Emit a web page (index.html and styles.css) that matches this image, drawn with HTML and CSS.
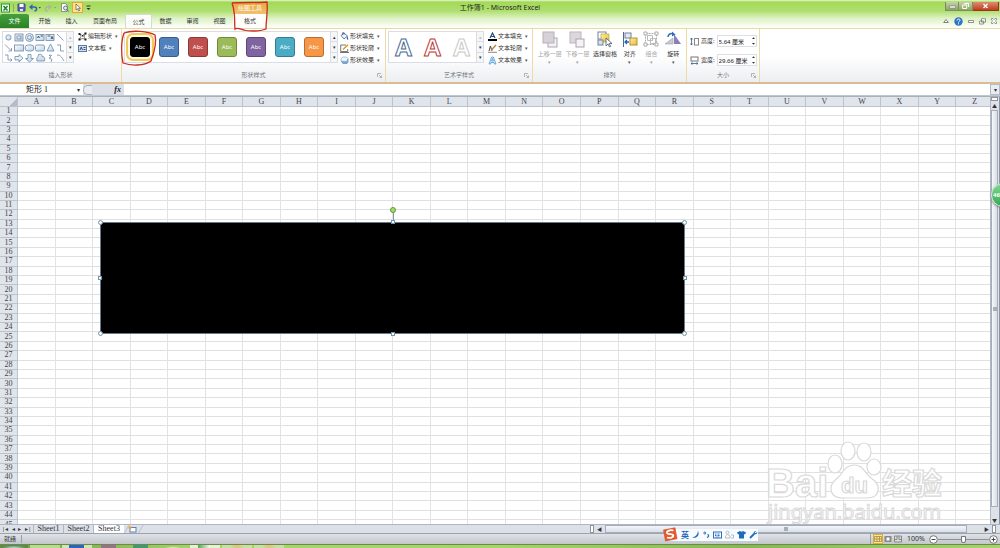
FILE: index.html
```
<!DOCTYPE html>
<html lang="zh-CN">
<head>
<meta charset="utf-8">
<title>工作簿1 - Microsoft Excel</title>
<link rel="stylesheet" href="styles.css">
</head>
<body>
<svg width="0" height="0" class="defs" aria-hidden="true">
  <defs>
    <linearGradient id="fillBlue" x1="0" y1="0" x2="1" y2="1"><stop offset="0" stop-color="#fff"/><stop offset="1" stop-color="#b9d3ea"/></linearGradient>
    <linearGradient id="gold" x1="0" y1="0" x2="1" y2="1"><stop offset="0" stop-color="#fdf0a0"/><stop offset="1" stop-color="#e6b93a"/></linearGradient>
    <symbol id="launcher" viewBox="0 0 5 5"><path d="M.5 4V.5H4M2 2l2.5 2.5M4.5 2.5v2h-2" fill="none" stroke="#999" stroke-width=".7"/></symbol>
    <symbol id="spinner" viewBox="0 0 5 10"><path d="M1 3h3L2.500 1.200zM1 7h3L2.500 8.800z" fill="#333"/></symbol>
  </defs>
</svg>

<header class="top">
  <div class="titlebar">
    <div class="quick">
      <svg width="9" height="10" viewBox="0 0 9 10"><rect x=".5" y="1" width="8" height="8" fill="#f2fbf0" stroke="#2f8f3a"/><path d="M2.500 3l4 4.500M6.500 3l-4 4.500" stroke="#16802a" stroke-width="1.400"/></svg>
      <i class="sep"></i>
      <button aria-label="保存"><svg width="9" height="9" viewBox="0 0 9 9"><path d="M1 1h7v7H1z" fill="#5a62b8" stroke="#3b4491"/><path d="M2.500 1h4v3h-4z" fill="#fff"/><path d="M3 6h3v2H3z" fill="#dfe3f5"/></svg></button>
      <button aria-label="撤消"><svg width="12" height="9" viewBox="0 0 12 9"><path d="M2 4h3.500c3 0 2.500 4 0 4" fill="none" stroke="#2f62b5" stroke-width="1.500"/><path d="M0 4l3.500-3v6z" fill="#2f62b5"/><path d="M9.500 4h2.500l-1.200 1.600z" fill="#444"/></svg></button>
      <button aria-label="恢复"><svg width="13" height="9" viewBox="0 0 13 9"><path d="M6 4H3.500C.5 4 1 8 3.500 8" fill="none" stroke="#a9b5a0" stroke-width="1.300"/><path d="M8 4L4.500 1v6z" fill="#a9b5a0"/><path d="M10 4h2.500l-1.200 1.600z" fill="#8c9c7c"/></svg></button>
      <button aria-label="打印预览"><svg width="9" height="9" viewBox="0 0 9 9"><path d="M1.500.5h4l1.500 2V8.500H1.500z" fill="#fff" stroke="#777" stroke-width=".8"/><circle cx="5.500" cy="5" r="2" fill="#d9ecfa" stroke="#4d5f78" stroke-width=".8"/><path d="M7 6.500l1.500 2" stroke="#4d5f78"/></svg></button>
      <button class="picked" aria-label="选择对象"><svg width="9" height="9" viewBox="0 0 9 9"><path d="M3 1v6l1.500-1.300L5.700 8l.9-.5-1.100-2.200h2z" fill="#fff" stroke="#555" stroke-width=".7"/></svg></button>
      <button aria-label="自定义"><svg width="5" height="6" viewBox="0 0 5 6"><path d="M.5 1h4" stroke="#333"/><path d="M.5 3h4L2.500 5z" fill="#333"/></svg></button>
    </div>
    <div class="context-title">绘图工具</div>
    <h1 class="title">工作簿1 - Microsoft Excel</h1>
    <div class="window-buttons">
      <button aria-label="最小化"><svg width="7" height="6" viewBox="0 0 7 6"><path d="M.5 3h6v2h-6z" fill="#fff" stroke="#667" stroke-width=".5"/></svg></button>
      <button aria-label="还原"><svg width="7" height="6" viewBox="0 0 7 6"><path d="M2.500.5h4v3.500M.7 2h4v3.500h-4z" fill="none" stroke="#fff"/></svg></button>
      <button class="close" aria-label="关闭"><svg width="7" height="6" viewBox="0 0 7 6"><path d="M1.500 1l4 4M5.500 1l-4 4" stroke="#fff" stroke-width="1.400"/></svg></button>
    </div>
  </div>
  <nav class="tabs">
    <button class="file">文件</button>
    <button>开始</button>
    <button>插入</button>
    <button class="wide">页面布局</button>
    <button class="hovered">公式</button>
    <button>数据</button>
    <button>审阅</button>
    <button>视图</button>
    <button class="active">格式</button>
    <div class="doc-buttons">
      <button aria-label="折叠功能区"><svg width="6" height="6" viewBox="0 0 6 6"><path d="M.7 4.500L3 1.500l2.300 3z" fill="#fff" stroke="#666" stroke-width=".8"/></svg></button>
      <button aria-label="帮助"><svg width="9" height="9" viewBox="0 0 9 9"><circle cx="4.500" cy="4.500" r="4.200" fill="#2f74c4"/><path d="M3 3.500c0-2 3-2 3-.2 0 1-1.500 1-1.500 2.200M4.500 6.300v1" fill="none" stroke="#fff"/></svg></button>
      <button aria-label="最小化窗口"><svg width="6" height="6" viewBox="0 0 6 6"><path d="M.5 2.500h5v2h-5z" fill="#fff" stroke="#777" stroke-width=".8"/></svg></button>
      <button aria-label="还原窗口"><svg width="7" height="7" viewBox="0 0 7 7"><path d="M2.500.7h4v3.500h-4zM.6 3h4v3h-4z" fill="#fff" stroke="#777" stroke-width=".8"/></svg></button>
      <button aria-label="关闭窗口"><svg width="6" height="6" viewBox="0 0 6 6"><path d="M.5.5h1.500l1 1.200 1-1.200h1.500v1.500L4.300 3l1.200 1v1.500H4L3 4.300 2 5.500H.5V4l1.200-1L.5 2z" fill="#fff" stroke="#777" stroke-width=".7"/></svg></button>
    </div>
  </nav>
</header>

<main class="ribbon">
  <section class="group shapes">
    <div class="body">
      <div class="gallery">
        <svg class="shape-grid" width="62" height="31" viewBox="0 0 62 31" fill="url(#fillBlue)" stroke="#6f88a8" stroke-width=".8">
          <circle cx="5.500" cy="5.500" r="2.600"/>
          <rect x="12" y="2" width="8" height="7"/><rect x="14" y="4" width="4" height="3"/>
          <circle cx="26.500" cy="5.500" r="4"/><circle cx="26.500" cy="5.500" r="2"/>
          <rect x="33" y="2.500" width="8" height="6"/><path d="M34.500 6l1-2 1 2M37.500 4h2.500" stroke="#234"/>
          <rect x="43" y="2.500" width="8" height="6"/><path d="M44.500 4h3M48 7l1-2.500 1 2.500" stroke="#234"/>
          <path d="M54 2l6.500 6.500" fill="none"/>
          <path d="M2 12.500l6 6M8.500 16v3h-3" fill="none"/>
          <rect x="11.500" y="13" width="9" height="6"/>
          <rect x="22" y="13" width="9" height="6" rx="3"/>
          <rect x="32.500" y="13" width="9" height="6" rx="1.500"/>
          <path d="M47.500 12l3.500 7h-7z"/><path d="M54 13h3.500v6H61" fill="none"/>
          <path d="M2 23h3v5h4M7.500 26.500L9 28l-1.500 1.500" fill="none"/>
          <path d="M12 24.500h4v-2l4 3.700-4 3.700v-2h-4zM25 22.500h3v4h2.500l-4 3.500-4-3.500H25zM34 29c-1-4 1-3 1.500-6.500 3-1 4 1 3.500 2 3 0 3 2 2.500 4.500z"/>
          <path d="M46 23l2 2-2 1 3 1.500-1 2.500M46 23l3 .5M54 23c4 0 5 3 7 6" fill="none"/>
        </svg>
        <div class="scroller"><button disabled aria-label="上一行">▴</button><button aria-label="下一行">▾</button><button aria-label="更多">▾</button></div>
      </div>
      <div class="commands">
        <button><svg width="9" height="9" viewBox="0 0 9 9"><path d="M1.500 2l3 1.500 3-2.500-1.500 4 2 3-3-1.500-4 1 2-3z" fill="none" stroke="#333" stroke-width=".6"/><path d="M.5 1h2v2h-2zM6.500.5h2v2h-2zM.5 6.500h2v2h-2zM6.500 6.500h2v2h-2zM4 3h1.500v1.500H4z" fill="#222"/></svg>编辑形状<b>▾</b></button>
        <button><svg width="9" height="9" viewBox="0 0 9 9"><rect x=".5" y="1.500" width="8" height="6" fill="#cfe1f3" stroke="#5b7ba4"/><path d="M2 6l1.300-3 1.200 3M5.500 3.500h2M5.500 5.500h2" fill="none" stroke="#223f6b" stroke-width=".9"/></svg>文本框<b>▾</b></button>
      </div>
    </div>
    <h2>插入形状</h2>
  </section>

  <section class="group styles">
    <div class="body">
      <div class="gallery">
        <div class="swatches">
          <button class="swatch black"><span>Abc</span></button>
          <button class="swatch blue"><span>Abc</span></button>
          <button class="swatch red"><span>Abc</span></button>
          <button class="swatch green"><span>Abc</span></button>
          <button class="swatch purple"><span>Abc</span></button>
          <button class="swatch teal"><span>Abc</span></button>
          <button class="swatch orange"><span>Abc</span></button>
        </div>
        <div class="scroller"><button aria-label="上一行">▴</button><button aria-label="下一行">▾</button><button aria-label="更多">▾</button></div>
      </div>
      <div class="commands">
        <button><svg width="9" height="9" viewBox="0 0 9 9"><path d="M1 3.500L4 1l3.500 3L4 7z" fill="#eef4fb" stroke="#46618a" stroke-width=".8"/><path d="M2.500 3V.7h1.500V3" fill="none" stroke="#46618a" stroke-width=".7"/><path d="M7 4c1 1 1.500 2.500 1 4-1.500-.5-1.500-2-1-4z" fill="#2f6fb8"/></svg>形状填充<b>▾</b></button>
        <button><svg width="9" height="9" viewBox="0 0 9 9"><path d="M6 1H.7v6.500h7V5" fill="#fff" stroke="#555" stroke-width=".8"/><path d="M3 5.500L8 .8" stroke="#d79a22" stroke-width="1.500"/><path d="M0 8.500h9" stroke="#777"/></svg>形状轮廓<b>▾</b></button>
        <button><svg width="9" height="9" viewBox="0 0 9 9"><path d="M1 5.500l2 2.500h4l1.500-2V3l-2-1.500H3L1 3.500z" fill="#7aa0cf"/><path d="M1 5V3l1.500-2h4L8 2.500 6.500 5.500z" fill="#eef5fd" stroke="#87a8cf" stroke-width=".6"/></svg>形状效果<b>▾</b></button>
      </div>
    </div>
    <h2>形状样式</h2><svg class="launch" width="5" height="5"><use href="#launcher"/></svg>
  </section>

  <section class="group wordart">
    <div class="body">
      <div class="gallery">
        <div class="letters"><button class="navy">A</button><button class="crimson">A</button><button class="pale">A</button></div>
        <div class="scroller"><button disabled aria-label="上一行">▴</button><button aria-label="下一行">▾</button><button aria-label="更多">▾</button></div>
      </div>
      <div class="commands">
        <button><svg width="9" height="9" viewBox="0 0 9 9"><path d="M2 6l2.500-5L7 6M3 4.500h3" fill="none" stroke="#254a86" stroke-width="1.200"/><path d="M0 7h9v2H0z" fill="#000"/></svg>文本填充<b>▾</b></button>
        <button><svg width="9" height="9" viewBox="0 0 9 9"><path d="M1 7l1.500-5L4 7" fill="none" stroke="#444"/><path d="M3 6.500L8 1" stroke="#b8893a" stroke-width="1.400"/><path d="M0 8.300h9" stroke="#888"/></svg>文本轮廓<b>▾</b></button>
        <button><svg width="9" height="9" viewBox="0 0 9 9"><path d="M1 8L3.700 1h1.600L8 8H6.500L6 6.500H3L2.500 8zM3.500 5h2l-1-2.500z" fill="#e6f4ff" stroke="#4e9bd8" stroke-width=".8"/></svg>文本效果<b>▾</b></button>
      </div>
    </div>
    <h2>艺术字样式</h2><svg class="launch" width="5" height="5"><use href="#launcher"/></svg>
  </section>

  <section class="group arrange">
    <div class="body">
      <button class="big long" disabled><svg width="16" height="17" viewBox="0 0 16 17"><rect x="6" y="7" width="9" height="9" fill="#f3f1f4" stroke="#aaa6ae"/><rect x="1" y="1" width="11" height="11" fill="#d6d0d8" stroke="#b6b0b8"/></svg>上移一层<b>▾</b></button>
      <button class="big long" disabled><svg width="16" height="17" viewBox="0 0 16 17"><rect x="1" y="1" width="11" height="11" fill="#ddd6de" stroke="#bbb5bd"/><rect x="7" y="8" width="8" height="8" fill="#f5f3f5" stroke="#aaa6ae"/></svg>下移一层<b>▾</b></button>
      <button class="big long"><svg width="16" height="17" viewBox="0 0 16 17"><rect x="1" y="1" width="8" height="7" fill="#fff" stroke="#70819b"/><rect x="4" y="3" width="8" height="8" fill="url(#gold)" stroke="#b2933a" stroke-width=".6"/><rect x="1" y="9" width="5" height="5" fill="#d7e1ec" stroke="#70819b"/><path d="M9 7v8l2-2 1.500 3 1.200-.6-1.500-2.900h2.800z" fill="#fff" stroke="#456" stroke-width=".8"/></svg>选择窗格</button>
      <button class="big"><svg width="16" height="17" viewBox="0 0 16 17"><path d="M1.500 1v15" stroke="#4f6992"/><rect x="3" y="2" width="6" height="5" fill="#e4eaf1" stroke="#6e829d"/><rect x="8" y="7" width="7" height="7" fill="url(#gold)" stroke="#b2933a"/><path d="M7 11H3M5 9l-2 2 2 2" fill="none" stroke="#2563ba" stroke-width="1.300"/></svg>对齐<b>▾</b></button>
      <button class="big" disabled><svg width="16" height="17" viewBox="0 0 16 17" fill="#fff" stroke="#aaa"><path d="M2.500 2.500h11v11h-11z" stroke-dasharray="2 1"/><path d="M4.500 4.500h5v5h-5zM7.500 7.500h5v5h-5z" stroke="#bbb"/><path d="M1 1h3v3H1zM12 1h3v3h-3zM1 12h3v3H1zM12 12h3v3h-3z"/></svg>组合<b>▾</b></button>
      <button class="big"><svg width="16" height="17" viewBox="0 0 16 17"><path d="M9 3v10h7z" fill="#8a7fb5"/><path d="M8 7v6H0z" fill="#c6cad2" stroke="#9ba3b1" stroke-width=".6"/><path d="M3 6c0-3 3-4 5-3" fill="none" stroke="#2e6ec0" stroke-width="1.500"/><path d="M7 .5l3.500 3L7 5.500z" fill="#2e6ec0"/></svg>旋转<b>▾</b></button>
    </div>
    <h2>排列</h2>
  </section>

  <section class="group size">
    <div class="body">
      <div class="field"><svg width="9" height="9" viewBox="0 0 9 9"><path d="M1.500 1v7M.3 2.500L1.500 1l1.200 1.500M.3 6.500L1.500 8l1.200-1.500" fill="none" stroke="#345a93" stroke-width=".8"/><rect x="4.500" y="1.500" width="4" height="6.500" fill="#fff" stroke="#888"/></svg><label for="h">高度:</label><span class="spin"><input id="h" value="5.64 厘米"><svg width="5" height="10"><use href="#spinner"/></svg></span></div>
      <div class="field"><svg width="9" height="9" viewBox="0 0 9 9"><path d="M1 7.500h7M2.500 6.300L1 7.500l1.500 1.200M6.500 6.300L8 7.500 6.500 8.700" fill="none" stroke="#345a93" stroke-width=".8"/><rect x="1" y="1" width="7" height="4" fill="#fff" stroke="#777"/></svg><label for="w">宽度:</label><span class="spin"><input id="w" value="29.66 厘米"><svg width="5" height="10"><use href="#spinner"/></svg></span></div>
    </div>
    <h2>大小</h2><svg class="launch" width="5" height="5"><use href="#launcher"/></svg>
  </section>
</main>

<div class="formula">
  <input class="name-box" aria-label="名称框" value="矩形 1">
  <button class="drop" aria-label="名称列表">▾</button>
  <div class="fx"><i></i><button>fx</button></div>
  <input class="formula-input" aria-label="编辑栏">
  <button class="expand" aria-label="展开编辑栏">▾</button>
</div>

<div class="workspace">
  <div class="sheet">
    <table id="grid"></table>
    <div class="rectangle">
      <span class="stem"></span><span class="knob rotate"></span>
      <span class="knob nw"></span><span class="knob ne"></span><span class="knob sw"></span><span class="knob se"></span>
      <span class="knob square n"></span><span class="knob square s"></span><span class="knob square w"></span><span class="knob square e"></span>
    </div>
    <svg class="watermark" width="182" height="86" viewBox="0 0 182 86">
      <g fill="#fff" stroke="#d9d9d9" stroke-width="1.200">
        <ellipse cx="88" cy="13" rx="7" ry="9"/><ellipse cx="104" cy="14" rx="7" ry="9"/>
        <ellipse cx="75" cy="26" rx="7" ry="9"/><ellipse cx="114" cy="29" rx="7" ry="8"/>
        <path d="M94 27c9 0 11 8 17 13 6 4 8 8 7 12-1 8-8 8-13 8H83c-7 0-12-2-12-10 0-7 7-9 11-15 3-5 7-8 12-8z"/>
        <text class="wm-big" x="6" y="59">Bai</text>
        <text class="wm-du" x="81" y="55">du</text>
        <text class="wm-cn" x="122" y="56">经验</text>
        <text class="wm-url" x="8" y="81">jingyan.baidu.com</text>
      </g>
    </svg>
  </div>
  <div class="vscroll">
    <i class="split"></i><button aria-label="向上">▲</button><div class="thumb"><i></i></div><button aria-label="向下">▼</button>
  </div>
</div>

<div class="sheetbar">
  <div class="nav"><button aria-label="首张">|◂</button><button aria-label="上一张">◂</button><button aria-label="下一张">▸</button><button aria-label="末张">▸|</button></div>
  <button class="stab">Sheet1</button><button class="stab">Sheet2</button><button class="stab current">Sheet3</button>
  <button class="new" aria-label="插入工作表"><svg width="20" height="9" viewBox="0 0 20 9"><path d="M0 9L5 0M14 9l5-9" stroke="#aab3c0" stroke-width=".7"/><rect x="6" y="2.500" width="6" height="4.500" fill="#fff" stroke="#5d7fb5"/><circle cx="6" cy="2.500" r="1.500" fill="#f0a030"/></svg></button>
  <div class="hscroll"><i class="split"></i><button aria-label="向左">◀</button><div class="thumb"><i></i></div><button aria-label="向右">▶</button><i class="split"></i></div>
</div>

<footer class="status">
  <span class="ready">就绪</span>
  <div class="views">
    <button class="on" aria-label="普通"><svg width="8" height="8" viewBox="0 0 8 8"><path d="M.5 1.500h7v5h-7zM.5 4h7M3 1.500v5M5.500 1.500v5" fill="none" stroke="#a28b4a" stroke-width=".8"/></svg></button>
    <button aria-label="页面布局"><svg width="8" height="8" viewBox="0 0 8 8"><path d="M.5 1h7v6h-7z" fill="#888"/><path d="M2.500 2.500h3v3h-3z" fill="#fff"/></svg></button>
    <button aria-label="分页预览"><svg width="8" height="8" viewBox="0 0 8 8"><path d="M.5 1h7v6h-7zM3 1v3.500h-2.500M5 1v3.500h2.500" fill="#ddd" stroke="#888"/></svg></button>
  </div>
  <button class="percent">100%</button>
  <button class="round" aria-label="缩小"><svg width="9" height="9" viewBox="0 0 9 9"><circle cx="4.500" cy="4.500" r="3.800" fill="#fff" stroke="#777"/><path d="M2.500 4.500h4" stroke="#444"/></svg></button>
  <input class="zoom" type="range" aria-label="缩放" min="0" max="100" value="50">
  <button class="round" aria-label="放大"><svg width="9" height="9" viewBox="0 0 9 9"><circle cx="4.500" cy="4.500" r="3.800" fill="#fff" stroke="#777"/><path d="M2.500 4.500h4M4.500 2.500v4" stroke="#444"/></svg></button>
</footer>
<div class="taskbar">
  <i class="orb"></i><i class="task t1"></i><i class="task t2"></i><i class="task t3"></i><i class="task t4"></i><i class="task t5"></i><i class="task t6"></i><i class="task t7"></i><i class="task t8"></i>
</div>

<div class="ime">
  <svg class="sogou" width="16" height="15" viewBox="0 0 16 15"><path d="M1.500 3L13 .8l2 11L3.500 14z" fill="#e8592b" stroke="#c74a20" stroke-width=".6"/><path d="M11.500 3.500C8 2.500 4.500 4 5 6c.5 1.800 6 .5 6.300 2.500.3 2-3.500 2.800-6.300 2" fill="none" stroke="#fff" stroke-width="1.800"/></svg>
  <strong>英</strong>
  <svg width="8" height="9" viewBox="0 0 8 9"><path d="M6 1c2 4-1 8-6 6.500C3.500 7 5.500 4.500 6 1z" fill="#2a6fbf"/></svg>
  <svg width="7" height="9" viewBox="0 0 7 9"><circle cx="1.800" cy="3" r="1" fill="none" stroke="#2a6fbf"/><path d="M4.500 4.500c2 .5 1 2.500-.5 3" fill="none" stroke="#2a6fbf" stroke-width="1.200"/></svg>
  <svg width="9" height="8" viewBox="0 0 9 8"><rect x=".5" y="1" width="8" height="6" fill="#fff" stroke="#2a6fbf"/><path d="M2 3h5M2 4.500h5" stroke="#2a6fbf" stroke-dasharray="1 .5"/><path d="M2.500 6h4" stroke="#2a6fbf" stroke-width=".7"/></svg>
  <svg width="9" height="9" viewBox="0 0 9 9"><circle cx="2.500" cy="2.500" r="1.500" fill="none" stroke="#b4bcc8"/><path d="M.5 8V6l2-1.500L5 6v2zM6 5h2.500v3H6" fill="none" stroke="#b4bcc8"/></svg>
  <svg width="9" height="9" viewBox="0 0 9 9"><path d="M3 1c1 1 2 1 3 0l3 1.500-1 2-1-.5v4.500H2V4l-1 .5-1-2z" fill="#1e6bb8"/></svg>
  <svg width="9" height="9" viewBox="0 0 9 9"><path d="M1 8l4-4" stroke="#1e6bb8" stroke-width="1.800"/><path d="M7.500 1C6 .5 4 2 4.500 4.500 7 5 8.500 3.500 8.300 2L6.500 3.200l-.8-.9z" fill="#1e6bb8"/></svg>
</div>
<div class="bubble">46</div>
<svg class="marks" width="280" height="70" viewBox="0 0 280 70" fill="none" stroke="#cf2a20" stroke-width="1.300" aria-hidden="true">
  <path d="M232 3c10-1 24 0 35-1 1 9-1 19-1 27-7 3-19 2-22 1-4-1-7-3-9-1-1-7 1-15-3-26"/>
  <path d="M124 33c8-3 24-2 31 2 2 8-1 18-4 26-7 5-20 5-28 2-2-9-2-22 1-30"/>
</svg>
<script src="grid.js"></script>
</body>
</html>
```
FILE: grid.js
```
const letters = 'ABCDEFGHIJKLMNOPQRSTUVWXYZ'.split('');
const cells = '<td></td>'.repeat(letters.length);
let rows = '';
for (let n = 1; n <= 45; n++) rows += `<tr><th scope="row">${n}</th>${cells}</tr>`;
document.getElementById('grid').innerHTML =
  '<thead><tr><th class="corner"></th>' +
  letters.map(l => `<th scope="col">${l}</th>`).join('') +
  `</tr></thead><tbody>${rows}</tbody>`;
```
FILE: styles.css
```
* { box-sizing: border-box; }
body {
  margin: 0;
  height: 100vh;
  display: flex;
  flex-direction: column;
  overflow: hidden;
  position: relative;
  background: #dfe3e9;
  color: #333;
  font: 6px/8px "Noto Sans", "Noto Sans CJK SC", sans-serif;
}
.defs { position: absolute; }
button, input { font: inherit; color: inherit; border: 0; padding: 0; margin: 0; background: none; border-radius: 0; }
button { display: flex; align-items: center; justify-content: center; white-space: nowrap; }
svg { flex: none; display: block; }
h1, h2 { margin: 0; font: inherit; }
b { font-weight: 400; font-size: 5px; color: #555; }

.top { background: linear-gradient(#e9f6d4 0, #a2da57 2px, #b0df70 11px, #dcf1c2 18px, #fbfef7 27px); }
.titlebar { height: 14px; display: flex; position: relative; }
.quick { width: 233px; display: flex; align-items: center; gap: 3px; padding: 1px 0 0 1px; }
.quick .sep { width: 1px; height: 8px; background: #8ab04e; }
.picked { border: 1px solid #dfa93a; background: #ffe18c; }
.context-title { width: 34px; margin-top: 2px; background: linear-gradient(#e9a63b, #f1c272); color: #fff; text-align: center; line-height: 12px; }
.title { position: absolute; left: 0; right: 0; top: 4px; text-align: center; font-size: 7px; color: #222; }
.window-buttons { margin-left: auto; display: flex; height: 9px; margin-top: 2px; padding-right: 1px; position: relative; }
.window-buttons button { width: 14px; background: linear-gradient(#c5d3a6, #8ea465); border: 1px solid #78905a; border-top: 0; }
.window-buttons button + button { border-left: 0; }
.window-buttons .close { width: 26px; background: linear-gradient(#dc8f73, #c23c1f); border-color: #8c3a28; }

.tabs { height: 14px; display: flex; }
.tabs > button { width: 27px; }
.tabs > .file { width: 29px; margin-right: 2px; background: linear-gradient(#44a03c, #2a8226); color: #fff; border-radius: 2px 2px 0 0; }
.tabs > .wide { width: 40px; }
.tabs > .hovered { border: 1px solid #d5dccb; border-bottom: 0; background: #fbfdf8; border-radius: 2px 2px 0 0; }
.tabs > .active { width: 34px; background: #fffefa; }
.doc-buttons { margin-left: auto; display: flex; gap: 5px; align-items: center; padding-right: 3px; }

.ribbon { display: flex; height: 56px; background: linear-gradient(#fff 0, #fff 50%, #eceef1); border-top: 1px solid #ecd9a8; border-bottom: 2px solid #d8bd95; }
.group { display: flex; flex-direction: column; position: relative; border-right: 1px solid #f0d9a4; }
.group h2 { text-align: center; color: #6e7480; height: 11px; }
.body { flex: 1; display: flex; min-height: 0; padding: 2px 2px 8px; align-items: flex-start; }
.shapes { width: 122px; }
.styles { width: 264px; }
.wordart { width: 147px; }
.arrange { width: 154px; }
.size { width: 73px; }
.launch { position: absolute; right: 3px; bottom: 4px; }
.gallery { display: flex; height: 32px; border: 1px solid #dadde3; background: #fff; }
.shapes .gallery { width: 72px; }
.styles .gallery { width: 214px; }
.wordart .gallery { width: 96px; }
.scroller { width: 7px; margin-left: auto; display: flex; flex-direction: column; border-left: 1px solid #dadde3; background: #f5f6f8; }
.scroller button { flex: 1; font-size: 5px; line-height: 6px; }
.scroller button + button { border-top: 1px solid #dadde3; }
.scroller button:disabled { color: #bbb; }
.commands { display: flex; flex-direction: column; gap: 2px; padding-left: 4px; }
.styles .commands { padding-left: 2px; }
.commands button { height: 10px; gap: 1px; justify-content: flex-start; }
.commands b { padding-left: 2px; }
.swatches { display: flex; flex: 1; justify-content: space-between; align-items: center; padding: 0 6px 0 5px; }
.swatch { width: 20px; height: 20px; border-radius: 3px; color: #fff; border: 1px solid; }
.black { background: #000; border-color: #000; box-shadow: 0 0 0 2px #fff8df, 0 0 0 4px #f0c95a; }
.blue { background: #4f81bd; border-color: #385d8a; }
.red { background: #c0504d; border-color: #8c3836; }
.green { background: #9bbb59; border-color: #71893f; }
.purple { background: #8064a2; border-color: #5c4776; }
.teal { background: #4bacc6; border-color: #357d91; }
.orange { background: #f79646; border-color: #b66d31; }
.letters { flex: 1; display: flex; align-items: center; justify-content: space-around; }
.letters button { width: 28px; font: 700 24px/28px "Open Sans", sans-serif; color: #fff; -webkit-text-stroke: 1px; }
.letters .navy { -webkit-text-stroke-color: #4a6a92; }
.letters .crimson { -webkit-text-stroke-color: #bb3b38; }
.letters .pale { -webkit-text-stroke-color: #c9c9c9; }
.arrange .body { padding-left: 3px; }
.big { flex-direction: column; width: 22px; justify-content: flex-start; gap: 2px; }
.big.long { width: 28px; }
.big b { line-height: 4px; }
.big:disabled, .big:disabled b { color: #a5a5a5; }
.size .body { flex-direction: column; gap: 7px; padding: 6px 2px 0 3px; }
.field { display: flex; align-items: center; gap: 2px; width: 100%; height: 12px; }
.field label { white-space: nowrap; }
.spin { display: flex; align-items: center; flex: 1; min-width: 0; height: 12px; border: 1px solid #dcdfe4; background: #fff; margin-left: auto; }
.spin input { flex: 1; min-width: 0; padding-left: 1px; height: 10px; color: #111; }

.formula { height: 12px; display: flex; background: #d5dbe3; border-bottom: 1px solid #c1c7d0; }
.name-box { width: 74px; background: #fff; text-align: center; font: 8px/10px "Liberation Serif", "Noto Sans CJK SC", serif; color: #222; }
.drop { width: 9px; background: #fff; }
.fx { width: 41px; display: flex; align-items: center; justify-content: space-between; padding-right: 3px; background: #dbe0e8; }
.fx i { width: 9px; height: 10px; border: 1px solid #aab2be; border-radius: 5px 0 0 5px; border-right: 0; background: #e8ebf0; }
.fx button { font: italic 700 8px/10px "Liberation Serif", serif; color: #222; }
.formula-input { flex: 1; min-width: 0; background: #fff; }
.expand { width: 10px; border: 1px solid #b4bbc6; background: #e9ecf1; }

.workspace { flex: 1; min-height: 0; display: flex; border-top: 1px solid #a9b0ba; }
.sheet { flex: 1; position: relative; overflow: hidden; background: #fff; }
#grid { width: calc(100% + 4px); height: calc(100% + 6px); table-layout: fixed; border-collapse: separate; border-spacing: 0; }
#grid th, #grid td { padding: 0; border-right: 1px solid #e2e3e5; border-bottom: 1px solid #dfe0e2; }
#grid th { background: #e0e5ec; font: 8px/8px "Liberation Serif", serif; color: #444; border-color: #bcc3cd; }
#grid thead th { height: 10px; }
#grid .corner { width: 18px; background: linear-gradient(135deg, #e0e5ec 70%, #b5bcc7 70%); }
.rectangle { position: absolute; left: 100px; top: 125px; width: 585px; height: 112px; background: #000; border: 1px solid #66788a; }
.knob { position: absolute; width: 5px; height: 5px; border: 1px solid #7895a5; border-radius: 50%; background: #f5fcff; }
.square { width: 4px; height: 4px; border-radius: 0; }
.nw { left: -3px; top: -3px; }
.ne { right: -3px; top: -3px; }
.sw { left: -3px; bottom: -3px; }
.se { right: -3px; bottom: -3px; }
.n { left: calc(50% - 2px); top: -3px; }
.s { left: calc(50% - 2px); bottom: -3px; }
.w { left: -3px; top: calc(50% - 2px); }
.e { right: -3px; top: calc(50% - 2px); }
.stem { position: absolute; left: 50%; top: -12px; width: 1px; height: 12px; background: #8596a5; }
.rotate { left: calc(50% - 3px); top: -16px; background: #a4dc68; border-color: #65963a; width: 6px; height: 6px; }
.watermark { position: absolute; right: 48px; bottom: 0; overflow: visible; }
.watermark text { font-family: "Liberation Sans", "Noto Sans CJK SC", sans-serif; }
.watermark .wm-big { font-size: 40px; font-weight: 700; }
.watermark .wm-du { font-size: 22px; font-weight: 700; }
.watermark .wm-cn { font-size: 30px; font-weight: 700; }
.watermark .wm-url { font-size: 20px; font-family: "Noto Sans", sans-serif; stroke-width: 1px; }

.vscroll { width: 10px; display: flex; flex-direction: column; background: #dde1e8; border-left: 1px solid #b1b7c2; border-right: 1px solid #8d94a0; padding-right: 1px; }
.vscroll button { height: 9px; font-size: 5px; }
.vscroll .split { height: 4px; border: 1px solid #8d94a0; background: #fff; }
.vscroll .thumb { flex: 1; margin-bottom: 8px; border: 1px solid #a6adba; background: linear-gradient(90deg, #f6f8fa, #d8dee8); display: flex; align-items: center; justify-content: center; }
.thumb i { width: 4px; height: 4px; background: #a9afb9; }

.sheetbar { height: 9px; display: flex; background: #dce1e8; border-top: 1px solid #b1b7c2; }
.nav { width: 34px; display: flex; justify-content: space-around; border-right: 1px solid #b1b7c2; }
.stab { width: 30px; font: 8px/8px "Liberation Serif", serif; border-right: 1px solid #b1b7c2; }
.stab.current { background: #fff; border-right: 0; }
.hscroll { display: flex; margin-left: auto; width: 41%; padding-right: 4px; }
.hscroll button { width: 11px; font-size: 5px; }
.hscroll .split { width: 4px; border: 1px solid #8d94a0; background: #fff; }
.hscroll .thumb { flex: 1; margin-right: 14px; border: 1px solid #a6adba; background: linear-gradient(#f3f5f8, #d9dfe8); display: flex; align-items: center; justify-content: center; }

.status { height: 11px; display: flex; align-items: center; background: linear-gradient(#dfe2e6, #c3c7cc); border-top: 1px solid #9da3ad; padding-right: 2px; }
.ready { width: 22px; padding-left: 4px; border-right: 1px solid #999fa8; }
.views { margin-left: auto; display: flex; padding-left: 2px; border-left: 1px solid #999fa8; }
.views button { width: 10px; height: 10px; }
.views .on { background: #ffe596; border: 1px solid #dfac35; }
.percent { width: 26px; font-size: 7px; }
.zoom { appearance: none; width: 51px; height: 9px; background: linear-gradient(#8d929a, #8d929a) center / 100% 1px no-repeat; }
.zoom::-webkit-slider-thumb { appearance: none; width: 5px; height: 7px; border: 1px solid #777; border-radius: 1px 1px 3px 3px; background: #fff; }
.taskbar { height: 4px; display: flex; gap: 2px; background: linear-gradient(90deg, #6f9c46, #a6d46b 20%, #a2d762 50%, #86b852 75%, #a6d46b); border-top: 1px solid #6c8a4c; overflow: hidden; }
.orb { width: 28px; background: radial-gradient(at bottom, #b9dcf5, #5f8a48 60%); }
.task { width: 30px; background: #b7dc8b; }
.task.t2 { background: linear-gradient(90deg, #cfe8b1 7px, #2a62c8 7px, #2a62c8 22px, #cfe8b1 22px); }
.task.t3 { background: linear-gradient(90deg, transparent 7px, #97718c 7px, #97718c 22px, transparent 22px); }
.task.t4 { background: linear-gradient(90deg, transparent 7px, #3f9a72 7px, #3f9a72 22px, transparent 22px); }
.task.t5 { background: radial-gradient(at bottom, #f0f6c8, transparent 40%); }
.task.t6 { background: linear-gradient(90deg, #e4f2d4 8px, #5ba054 8px, #f4faf0 20px, #e4f2d4 20px); }
.task.t7, .task.t8 { background: linear-gradient(90deg, #c9e0a4 8px, #dfc27c 15px, #c9e0a4 22px); }

.ime { position: absolute; left: 662px; bottom: 6px; height: 15px; display: flex; align-items: center; gap: 3px; background: linear-gradient(#f8fbff, #f8fbff) 6px 2px / 100% 12px no-repeat; }
.ime strong { font-size: 8px; color: #1e6bb8; }
.bubble { position: absolute; right: -15px; top: 183px; width: 24px; height: 24px; border: 1px solid #d5e8d5; border-radius: 50%; background: linear-gradient(#7fd98f, #35a955); color: #fff; font-weight: 700; line-height: 22px; padding-left: 1px; box-shadow: 0 1px 2px #777; }
.marks { position: absolute; left: 0; top: 0; }
```
